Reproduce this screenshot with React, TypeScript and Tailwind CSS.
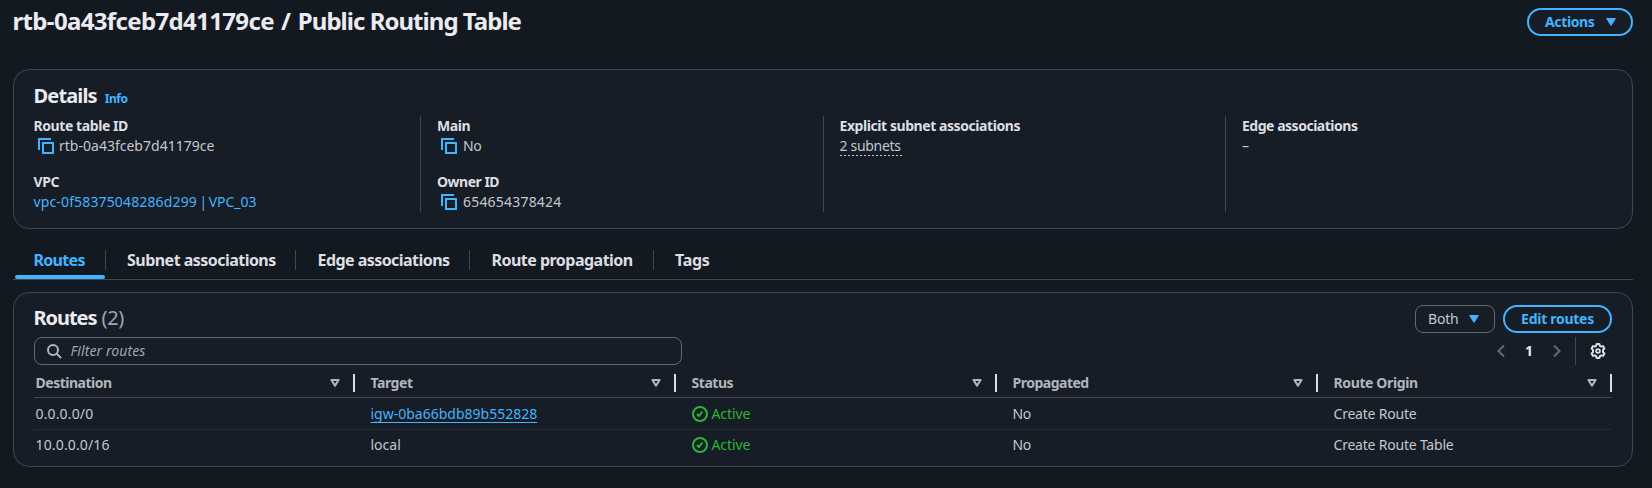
import type { ReactNode } from "react";

function CopyIcon() {
  return (
    <svg width="16" height="16" viewBox="0 0 16 16" fill="none" stroke="#42b4ff" strokeWidth="2" className="shrink-0">
      <path d="M13 1H1v11" />
      <path d="M5 5h10v10H5z" />
    </svg>
  );
}

function CaretDown() {
  return (
    <svg width="10" height="8" viewBox="0 0 10 8" fill="#42b4ff" stroke="#42b4ff" strokeLinejoin="round" className="shrink-0">
      <path d="M.6.5h8.8L5 7.4z" />
    </svg>
  );
}

function SortIcon() {
  return (
    <svg width="10" height="8" viewBox="0 0 10 8" fill="none" stroke="#b4b4bb" strokeWidth="2" strokeLinejoin="round" className="shrink-0">
      <path d="M1.4 1h7.2L5 6.6z" />
    </svg>
  );
}

function CheckIcon() {
  return (
    <svg width="16" height="16" viewBox="0 0 16 16" fill="none" stroke="#2bb534" strokeWidth="2" strokeLinejoin="round" className="shrink-0">
      <circle cx="8" cy="8" r="7" />
      <path d="m5 8 2 2 3.5-4.5" />
    </svg>
  );
}

function GearIcon() {
  return (
    <svg width="16" height="16" viewBox="0 0 16 16" fill="none" stroke="#dedee3" strokeWidth="2" strokeLinejoin="round">
      <path d="M6.6 1h2.8l.5 1.9 1.2.7 1.9-.5 1.4 2.4L13 6.9v2.2l1.4 1.4-1.4 2.4-1.9-.5-1.2.7-.5 1.9H6.6l-.5-1.9-1.2-.7-1.9.5-1.4-2.4L3 9.1V6.9L1.6 5.5 3 3.1l1.9.5 1.2-.7z" />
      <circle cx="8" cy="8" r="1.9" strokeWidth="1.8" />
    </svg>
  );
}

function Field({ label, labelClass, children }: { label: string; labelClass: string; children: ReactNode }) {
  return (
    <div className="flex flex-col">
      <div className={`font-bold text-[#dedee3] ${labelClass}`}>{label}</div>
      <div className="flex h-5 items-center">{children}</div>
    </div>
  );
}

function Copyable({ children, textClass }: { children: string; textClass: string }) {
  return (
    <div className="flex items-center gap-[5px] pl-1">
      <CopyIcon />
      <span className={textClass}>{children}</span>
    </div>
  );
}

const tabs = [
  { label: "Routes", cls: "w-[93px] border-r pl-[20.5px] text-[#42b4ff] tracking-[-0.7px]" },
  { label: "Subnet associations", cls: "w-[190px] border-r pl-[21px] tracking-[-0.53px]" },
  { label: "Edge associations", cls: "w-[174px] border-r pl-[21.5px] tracking-[-0.55px]" },
  { label: "Route propagation", cls: "w-[184px] border-r pl-[21.5px] tracking-[-0.52px]" },
  { label: "Tags", cls: "pl-[21px] tracking-[-0.3px]" },
];

const headers = [
  { label: "Destination", cls: "pl-[1.5px] tracking-[-0.48px]" },
  { label: "Target", cls: "pl-[15.5px] tracking-[-0.45px]" },
  { label: "Status", cls: "pl-[15.5px] tracking-[-0.45px]" },
  { label: "Propagated", cls: "pl-[15.5px] tracking-[-0.5px]" },
  { label: "Route Origin", cls: "pl-[15.5px] tracking-[-0.38px]" },
];

const columns = "grid grid-cols-[321px_321px_321px_321px_294px]";

function RouteRow({ dest, target, origin, rowClass }: { dest: string; target: ReactNode; origin: string; rowClass: string }) {
  return (
    <div className={`${columns} items-start ${rowClass}`}>
      <div className="pl-[1.5px] tracking-[0.15px]">{dest}</div>
      <div className="pl-[15.5px]">{target}</div>
      <div className="flex h-5 items-center gap-[3.5px] pl-4 tracking-[-0.1px] text-[#2bb534]">
        <CheckIcon />
        <span>Active</span>
      </div>
      <div className="pl-[15.5px] tracking-[-0.3px]">No</div>
      <div className="pl-[15.5px] tracking-[-0.21px]">{origin}</div>
    </div>
  );
}

export default function App() {
  return (
    <div className="h-[488px] w-[1652px] overflow-hidden bg-[#131920] pr-[19px] pl-[13px] font-['Noto_Sans',sans-serif] text-[14px] leading-5 text-[#c6c6cd]">
      <header className="flex h-[69px] items-start justify-between">
        <h1 className="mt-[6px] -ml-[0.5px] text-[24px] leading-[30px] font-bold tracking-[-0.65px] text-[#ebebf0]">
          rtb-0a43fceb7d41179ce<span className="mr-[2px] ml-[1.5px]"> / </span>
          <span className="tracking-[-0.97px]">Public Routing Table</span>
        </h1>
        <button className="mt-2 flex h-7 w-[106px] items-center justify-between rounded-full border-2 border-[#42b4ff] bg-[#161d26] pr-[15px] pl-4 font-bold tracking-[-0.36px] text-[#42b4ff]">
          Actions
          <CaretDown />
        </button>
      </header>

      <section className="h-[160px] rounded-2xl border border-[#424650] bg-[#161d26] px-[19.5px] pt-[14px]">
        <div className="flex h-6 items-baseline">
          <h2 className="text-[20px] leading-6 font-bold tracking-[-0.85px] text-[#ebebf0]">Details</h2>
          <a className="ml-[8px] text-[12px] leading-4 font-bold tracking-[-0.45px] text-[#42b4ff]">Info</a>
        </div>
        <div className="mt-2 grid h-24 grid-cols-[386.5px_403px_402px_1fr]">
          <div className="flex flex-col gap-4">
            <Field label="Route table ID" labelClass="tracking-[-0.42px]">
              <Copyable textClass="pl-[0.5px] tracking-[0.01px]">rtb-0a43fceb7d41179ce</Copyable>
            </Field>
            <Field label="VPC" labelClass="tracking-[-0.4px]">
              <a className="whitespace-pre text-[#42b4ff]">
                <span className="tracking-[0.14px]">vpc-0f58375048286d299</span>
                <span className="tracking-[-1.1px]"> | </span>
                <span>VPC_03</span>
              </a>
            </Field>
          </div>
          <div className="flex flex-col gap-4 border-l border-[#424650] pl-4">
            <Field label="Main" labelClass="tracking-[-0.45px]">
              <Copyable textClass="pl-px tracking-[-0.3px]">No</Copyable>
            </Field>
            <Field label="Owner ID" labelClass="tracking-[-0.5px]">
              <Copyable textClass="pl-px tracking-[0.2px]">654654378424</Copyable>
            </Field>
          </div>
          <div className="border-l border-[#424650] pl-[15.5px]">
            <Field label="Explicit subnet associations" labelClass="tracking-[-0.43px]">
              <span className="relative tracking-[-0.3px]">
                2 subnets
                <svg width="62" height="1" className="absolute bottom-0 left-0">
                  <path d="M0 .5h62" stroke="#c6c6cd" strokeDasharray="2 2" />
                </svg>
              </span>
            </Field>
          </div>
          <div className="border-l border-[#424650] pl-4">
            <Field label="Edge associations" labelClass="tracking-[-0.48px]">
              –
            </Field>
          </div>
        </div>
      </section>

      <nav className="relative mt-[21px] flex h-[30px] items-start border-b border-[#424650] text-[16px] font-bold text-[#dedee3]">
        {tabs.map((t) => (
          <div key={t.label} className={`h-5 border-[#424650] ${t.cls}`}>
            {t.label}
          </div>
        ))}
        <div className="absolute bottom-0 left-[2px] h-1 w-[90px] rounded-[2px] bg-[#42b4ff]" />
      </nav>

      <section className="mt-3 h-[175px] rounded-2xl border border-[#424650] bg-[#161d26] px-5 pt-3">
        <div className="flex h-7 items-start justify-between">
          <h2 className="mt-px -ml-[0.5px] text-[20px] leading-6 font-bold tracking-[-1.05px] text-[#ebebf0]">
            Routes<span className="ml-[5px] font-normal tracking-[-0.3px] text-[#a4a4ad]">(2)</span>
          </h2>
          <div className="flex gap-2">
            <button className="flex h-7 w-20 items-center justify-between rounded-lg border border-[#656871] pr-[15px] pl-3 tracking-[-0.2px]">
              Both
              <CaretDown />
            </button>
            <button className="h-7 w-[109px] rounded-full border-2 border-[#42b4ff] text-center font-bold tracking-[-0.28px] text-[#42b4ff]">
              Edit routes
            </button>
          </div>
        </div>

        <div className="mt-1 flex h-7 items-center justify-between">
          <div className="flex h-7 w-[648px] items-center gap-2 rounded-lg border border-[#656871] pl-3">
            <svg width="15" height="15" viewBox="0 0 15 15" fill="none" stroke="#b4b4bb" strokeWidth="2">
              <circle cx="6" cy="6" r="5" />
              <path d="m9.5 9.5 4.6 4.6" />
            </svg>
            <span className="pl-[0.5px] tracking-[0.1px] text-[#a4a4ad] italic">Filter routes</span>
          </div>
          <div className="flex h-7 items-center">
            <svg width="8" height="14" viewBox="0 0 8 14" fill="none" stroke="#656871" strokeWidth="2">
              <path d="M7 1.5 1.5 7 7 12.5" />
            </svg>
            <span className="w-[48px] text-center font-bold text-[#ebebf0]">1</span>
            <svg width="8" height="14" viewBox="0 0 8 14" fill="none" stroke="#656871" strokeWidth="2">
              <path d="M1 1.5 6.5 7 1 12.5" />
            </svg>
            <div className="mr-[14px] ml-[14px] h-7 w-px bg-[#424650]" />
            <GearIcon />
            <div className="w-[6px]" />
          </div>
        </div>

        <div>
          <div className={`${columns} h-[33px] border-b border-[#424650] pt-2 font-bold text-[#b4b4bb]`}>
            {headers.map((h) => (
              <div key={h.label} className={`flex h-5 items-center ${h.cls}`}>
                <span className="grow">{h.label}</span>
                <SortIcon />
                <div className="ml-[13px] h-[18px] w-0.5 bg-[#dedee3]" />
              </div>
            ))}
          </div>
          <RouteRow
            rowClass="h-8 border-b border-[#232b37] pt-[6px]"
            dest="0.0.0.0/0"
            target={
              <a className="text-[#42b4ff] underline decoration-1 underline-offset-[3px] [text-decoration-skip-ink:none]">
                igw-0ba66bdb89b552828
              </a>
            }
            origin="Create Route"
          />
          <RouteRow rowClass="pt-[5px]" dest="10.0.0.0/16" target="local" origin="Create Route Table" />
        </div>
      </section>
    </div>
  );
}
